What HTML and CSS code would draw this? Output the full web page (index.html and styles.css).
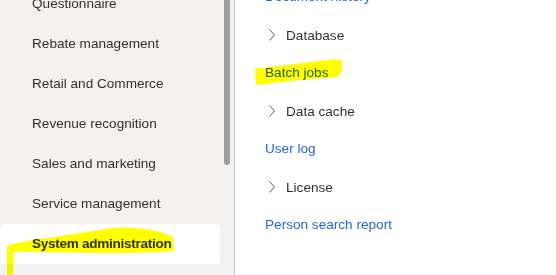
FILE: index.html
```html
<!DOCTYPE html>
<html lang="en">
<head>
    <meta charset="UTF-8">
    <title>System administration</title>
    <link rel="stylesheet" href="styles.css">
</head>
<body>
    <div class="page">
        <nav class="modules">
            <ul class="module-list">
                <li class="module">Questionnaire</li>
                <li class="module">Rebate management</li>
                <li class="module">Retail and Commerce</li>
                <li class="module">Revenue recognition</li>
                <li class="module">Sales and marketing</li>
                <li class="module">Service management</li>
                <li class="module selected">System administration</li>
            </ul>
            <div class="scrollbar"></div>
        </nav>
        <main class="links">
            <a class="link">Document history</a>
            <div class="group"><svg class="chevron" width="8" height="14" viewBox="0 0 8 14"><path d="M1.5 1.5 L6.5 7 L1.5 12.5" fill="none" stroke="#605e5c" stroke-width="1"/></svg>Database</div>
            <a class="link">Batch jobs</a>
            <div class="group"><svg class="chevron" width="8" height="14" viewBox="0 0 8 14"><path d="M1.5 1.5 L6.5 7 L1.5 12.5" fill="none" stroke="#605e5c" stroke-width="1"/></svg>Data cache</div>
            <a class="link">User log</a>
            <div class="group"><svg class="chevron" width="8" height="14" viewBox="0 0 8 14"><path d="M1.5 1.5 L6.5 7 L1.5 12.5" fill="none" stroke="#605e5c" stroke-width="1"/></svg>License</div>
            <a class="link">Person search report</a>
        </main>
    </div>

    <!-- highlighter marks drawn over the screenshot -->
    <svg class="marks" width="556" height="275" viewBox="0 0 556 275">
        <path d="M7 275 L7 247 Q8 244 14 244 L33 240 L67 235 L100 230 Q117 226 135 228 Q160 230 173 237 L174 251 Q150 253 100 253 L40 252 Q20 251 14 252 L13 275 Z"
              fill="#ffff00"/>
        <path d="M255 69 L335 59 L342 60 L342 70 L338 77 L300 80 L256 85 Z" fill="#ffff00"/>
    </svg>
</body>
</html>
```

FILE: styles.css
```css
body {
    margin: 0;
    font-family: "Segoe UI", "Liberation Sans", Arial, sans-serif;
    font-size: 13.6px;
    color: #323130;
    background-color: #fff;
    overflow: hidden;
}
.page {
    display: flex;
    height: 275px;
}
.modules {
    position: relative;
    width: 234px;
    flex-shrink: 0;
    background-color: #f3f2f1;
    border-right: 1px solid #c8c6c4;
    overflow: hidden;
}
.module-list {
    list-style: none;
    margin: -16px 0 0 0;
    padding: 0;
}
.module {
    width: 188px;
    height: 40px;
    line-height: 40px;
    padding-left: 32px;
    border-radius: 4px;
}
.module.selected {
    background-color: #fff;
    font-weight: 600;
    letter-spacing: -0.3px;
}
.scrollbar {
    position: absolute;
    top: -4px;
    left: 224px;
    width: 6px;
    height: 169px;
    background-color: #a19f9d;
    border-radius: 0 0 3px 3px;
}
.links {
    display: flex;
    flex-direction: column;
    margin-top: -22px;
    padding-left: 30px;
}
.link {
    height: 38px;
    line-height: 38px;
    color: #2266e3;
    cursor: pointer;
}
.group {
    display: flex;
    align-items: center;
    gap: 10px;
    height: 38px;
    padding-left: 3px;
}
.chevron {
    flex-shrink: 0;
}
.marks {
    position: absolute;
    top: 0;
    left: 0;
    mix-blend-mode: multiply;
    pointer-events: none;
}
```
